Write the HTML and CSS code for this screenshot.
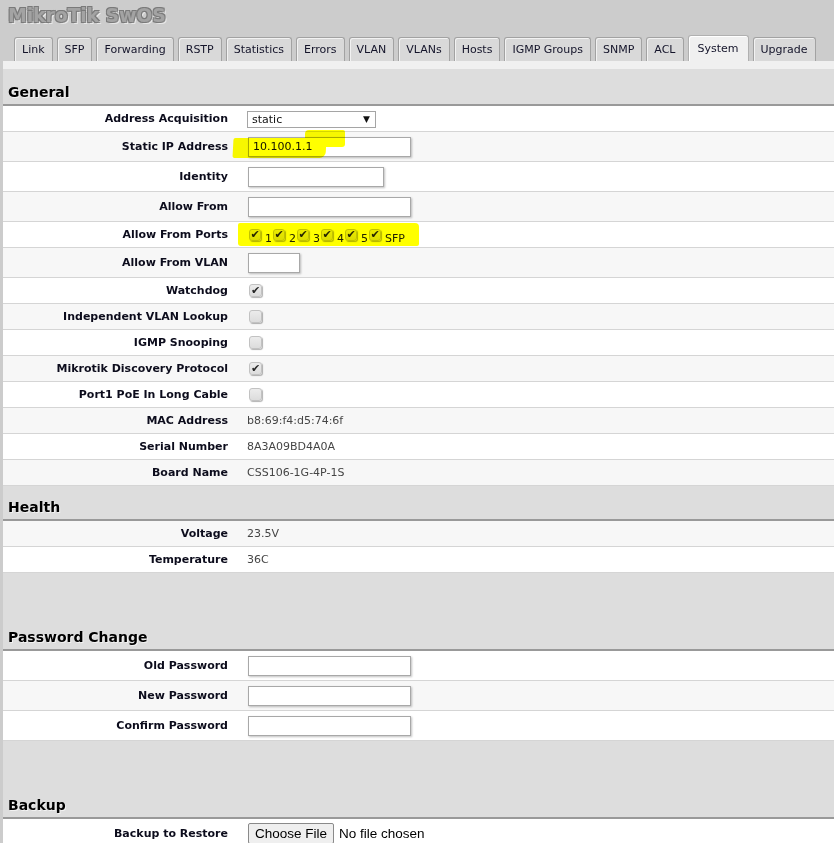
FILE: index.html
```html
<!DOCTYPE html>
<html>
<head>
<meta charset="utf-8">
<title>MikroTik SwOS</title>
<link rel="stylesheet" href="styles.css">
</head>
<body>
<div class="page">
  <header class="top">
    <div class="logo">MikroTik SwOS</div>
    <nav class="tabs">
      <span class="tab">Link</span>
      <span class="tab">SFP</span>
      <span class="tab">Forwarding</span>
      <span class="tab">RSTP</span>
      <span class="tab">Statistics</span>
      <span class="tab">Errors</span>
      <span class="tab">VLAN</span>
      <span class="tab">VLANs</span>
      <span class="tab">Hosts</span>
      <span class="tab">IGMP Groups</span>
      <span class="tab">SNMP</span>
      <span class="tab">ACL</span>
      <span class="tab active">System</span>
      <span class="tab">Upgrade</span>
    </nav>
  </header>
  <div class="strip"></div>
  <main class="content">
    <section class="sec first">
      <h2 class="sec-title">General</h2>
      <div class="row">
        <div class="lbl">Address Acquisition</div>
        <div class="val"><div class="select"><span>static</span><span class="arrow">▼</span></div></div>
      </div>
      <div class="row tall alt">
        <div class="lbl">Static IP Address</div>
        <div class="val">
          <input class="field w-ip" type="text" value="10.100.1.1">
          <span class="mark mark-ip1"></span>
          <span class="mark mark-ip2"></span>
        </div>
      </div>
      <div class="row tall">
        <div class="lbl">Identity</div>
        <div class="val"><input class="field w-id" type="text" value=""></div>
      </div>
      <div class="row tall alt">
        <div class="lbl">Allow From</div>
        <div class="val"><input class="field w-ip" type="text" value=""></div>
      </div>
      <div class="row">
        <div class="lbl">Allow From Ports</div>
        <div class="val">
          <div class="ports">
            <span class="port"><span class="cb on"></span><span class="pn">1</span></span>
            <span class="port"><span class="cb on"></span><span class="pn">2</span></span>
            <span class="port"><span class="cb on"></span><span class="pn">3</span></span>
            <span class="port"><span class="cb on"></span><span class="pn">4</span></span>
            <span class="port"><span class="cb on"></span><span class="pn">5</span></span>
            <span class="port"><span class="cb on"></span><span class="pn">SFP</span></span>
          </div>
          <span class="mark mark-ports"></span>
        </div>
      </div>
      <div class="row tall alt">
        <div class="lbl">Allow From VLAN</div>
        <div class="val"><input class="field w-vlan" type="text" value=""></div>
      </div>
      <div class="row">
        <div class="lbl">Watchdog</div>
        <div class="val"><span class="cb on"></span></div>
      </div>
      <div class="row alt">
        <div class="lbl">Independent VLAN Lookup</div>
        <div class="val"><span class="cb"></span></div>
      </div>
      <div class="row">
        <div class="lbl">IGMP Snooping</div>
        <div class="val"><span class="cb"></span></div>
      </div>
      <div class="row alt">
        <div class="lbl">Mikrotik Discovery Protocol</div>
        <div class="val"><span class="cb on"></span></div>
      </div>
      <div class="row">
        <div class="lbl">Port1 PoE In Long Cable</div>
        <div class="val"><span class="cb"></span></div>
      </div>
      <div class="row alt">
        <div class="lbl">MAC Address</div>
        <div class="val text">b8:69:f4:d5:74:6f</div>
      </div>
      <div class="row">
        <div class="lbl">Serial Number</div>
        <div class="val text">8A3A09BD4A0A</div>
      </div>
      <div class="row alt">
        <div class="lbl">Board Name</div>
        <div class="val text">CSS106-1G-4P-1S</div>
      </div>
    </section>

    <section class="sec">
      <h2 class="sec-title">Health</h2>
      <div class="row alt">
        <div class="lbl">Voltage</div>
        <div class="val text">23.5V</div>
      </div>
      <div class="row">
        <div class="lbl">Temperature</div>
        <div class="val text">36C</div>
      </div>
    </section>

    <section class="sec spaced">
      <h2 class="sec-title">Password Change</h2>
      <div class="row tall">
        <div class="lbl">Old Password</div>
        <div class="val"><input class="field w-ip" type="password" value=""></div>
      </div>
      <div class="row tall alt">
        <div class="lbl">New Password</div>
        <div class="val"><input class="field w-ip" type="password" value=""></div>
      </div>
      <div class="row tall">
        <div class="lbl">Confirm Password</div>
        <div class="val"><input class="field w-ip" type="password" value=""></div>
      </div>
    </section>

    <section class="sec spaced">
      <h2 class="sec-title">Backup</h2>
      <div class="row tall">
        <div class="lbl">Backup to Restore</div>
        <div class="val file"><button class="filebtn" type="button">Choose File</button><span class="nofile">No file chosen</span></div>
      </div>
    </section>
  </main>
</div>
</body>
</html>
```

FILE: styles.css
```css
* { box-sizing: border-box; }

html, body {
  margin: 0;
  padding: 0;
  background: #cccccc;
  font-family: "DejaVu Sans", Verdana, sans-serif;
  font-size: 11px;
  color: #000;
}

.page {
  width: 834px;
  height: 843px;
  overflow: hidden;
}

/* header */
.top {
  padding-top: 4px;
}

.logo {
  padding-left: 8px;
  font-size: 19px;
  line-height: 22px;
  font-weight: bold;
  color: #a3a3a3;
  letter-spacing: -0.2px;
  text-shadow:
    -1px -1px 0 #7a7a7a,
    1px -1px 0 #7a7a7a,
    -1px 1px 0 #7a7a7a,
    1px 1px 0 #8a8a8a,
    2px 2px 0 #e8e8e8;
}

.tabs {
  display: flex;
  align-items: flex-end;
  gap: 4px;
  padding-left: 14px;
  margin-top: 9px;
  height: 26px;
}

.tab {
  height: 24px;
  padding: 0 7px;
  line-height: 23px;
  background: #d9d9d9;
  border: 1px solid #a2a2a2;
  border-bottom: none;
  border-radius: 3px 3px 0 0;
  box-shadow: inset 1px 1px 0 #f2f2f2;
  color: #14142a;
  white-space: nowrap;
}

.tab.active {
  height: 26px;
  line-height: 26px;
  padding: 0 9px;
  background: #f0f0f0;
  border-color: #b0b0b0;
  box-shadow: inset 1px 1px 0 #ffffff;
}

.strip {
  margin-left: 3px;
  height: 8px;
  background: #f0f0f0;
}

/* content */
.content {
  margin-left: 3px;
  background: #dddddd;
  padding-top: 2px;
  min-height: 800px;
}

.sec.spaced {
  margin-top: 43px;
}

.sec-title {
  margin: 0;
  padding: 12px 5px 3px;
  font-size: 14px;
  line-height: 18px;
  font-weight: bold;
  color: #000;
  text-shadow: 1px 1px 0 #f2f2f2;
  border-bottom: 2px solid #999999;
}

.row {
  display: grid;
  grid-template-columns: 225px 1fr;
  column-gap: 19px;
  height: 26px;
  background: #ffffff;
  border-bottom: 1px solid #d5d5d5;
}

.row.tall { height: 30px; }
.row.alt { background: #f7f7f7; }

.lbl {
  display: flex;
  align-items: center;
  justify-content: flex-end;
  font-weight: bold;
  color: #0c0c1c;
  white-space: nowrap;
}

.val {
  position: relative;
  display: flex;
  align-items: center;
}

.val.text {
  color: #454545;
}

/* controls */
.select {
  width: 129px;
  height: 17px;
  margin-top: 1px;
  border: 1px solid #a5a5a5;
  background: #fff;
  display: flex;
  align-items: center;
  justify-content: space-between;
  padding: 0 5px 0 4px;
  color: #111;
}

.select .arrow {
  font-size: 9px;
  color: #111;
}

.field {
  height: 20px;
  margin: 0 0 0 1px;
  padding: 0 4px;
  border: 1px solid #a8a8a8;
  background: #fff;
  box-shadow: 1px 1px 2px rgba(0, 0, 0, 0.25);
  font-family: "DejaVu Sans", Verdana, sans-serif;
  font-size: 11px;
  color: #111;
  outline: none;
}

.w-ip { width: 163px; }
.w-id { width: 136px; }
.w-vlan { width: 52px; }

.cb {
  width: 13px;
  height: 13px;
  margin-left: 2px;
  border: 1px solid #c2c2c2;
  border-radius: 3px;
  background: linear-gradient(#ececec, #dcdcdc);
  box-shadow: 1px 1px 1px rgba(0, 0, 0, 0.3);
  display: inline-flex;
  align-items: center;
  justify-content: center;
  flex: none;
}

.cb.on::after {
  content: "\2714";
  font-size: 11px;
  line-height: 1;
  color: #262626;
}

.ports {
  display: flex;
  align-items: center;
  padding-left: 2px;
}

.port {
  display: inline-flex;
  align-items: flex-end;
  margin-right: 1px;
}

.port .cb {
  width: 12px;
  height: 12px;
  margin-left: 0;
}

.pn {
  margin-left: 4px;
  position: relative;
  top: 3px;
  line-height: 1;
  color: #222;
}

/* marker highlights */
.mark {
  position: absolute;
  background: #ffff00;
  mix-blend-mode: multiply;
  pointer-events: none;
  z-index: 2;
}

.mark-ip1 {
  left: -14px;
  top: 6px;
  width: 93px;
  height: 20px;
  border-radius: 2px 3px 6px 2px;
  transform: skewX(-3deg);
}

.mark-ip2 {
  left: 58px;
  top: -2px;
  width: 40px;
  height: 17px;
  border-radius: 4px 2px 3px 3px;
}

.mark-ports {
  left: -9px;
  top: 1px;
  width: 181px;
  height: 23px;
  border-radius: 2px 4px 2px 3px;
}

/* file input */
.val.file {
  gap: 5px;
  align-items: flex-start;
  padding-top: 4px;
}

.filebtn {
  height: 21px;
  padding: 0 6px;
  margin-left: 1px;
  border: 1px solid #8a8a8a;
  border-radius: 2px;
  background: #efefef;
  font-family: "Liberation Sans", Arial, sans-serif;
  font-size: 13.5px;
  line-height: 19px;
  color: #000;
}

.nofile {
  font-family: "Liberation Sans", Arial, sans-serif;
  font-size: 13.5px;
  line-height: 21px;
  color: #000;
}
```
